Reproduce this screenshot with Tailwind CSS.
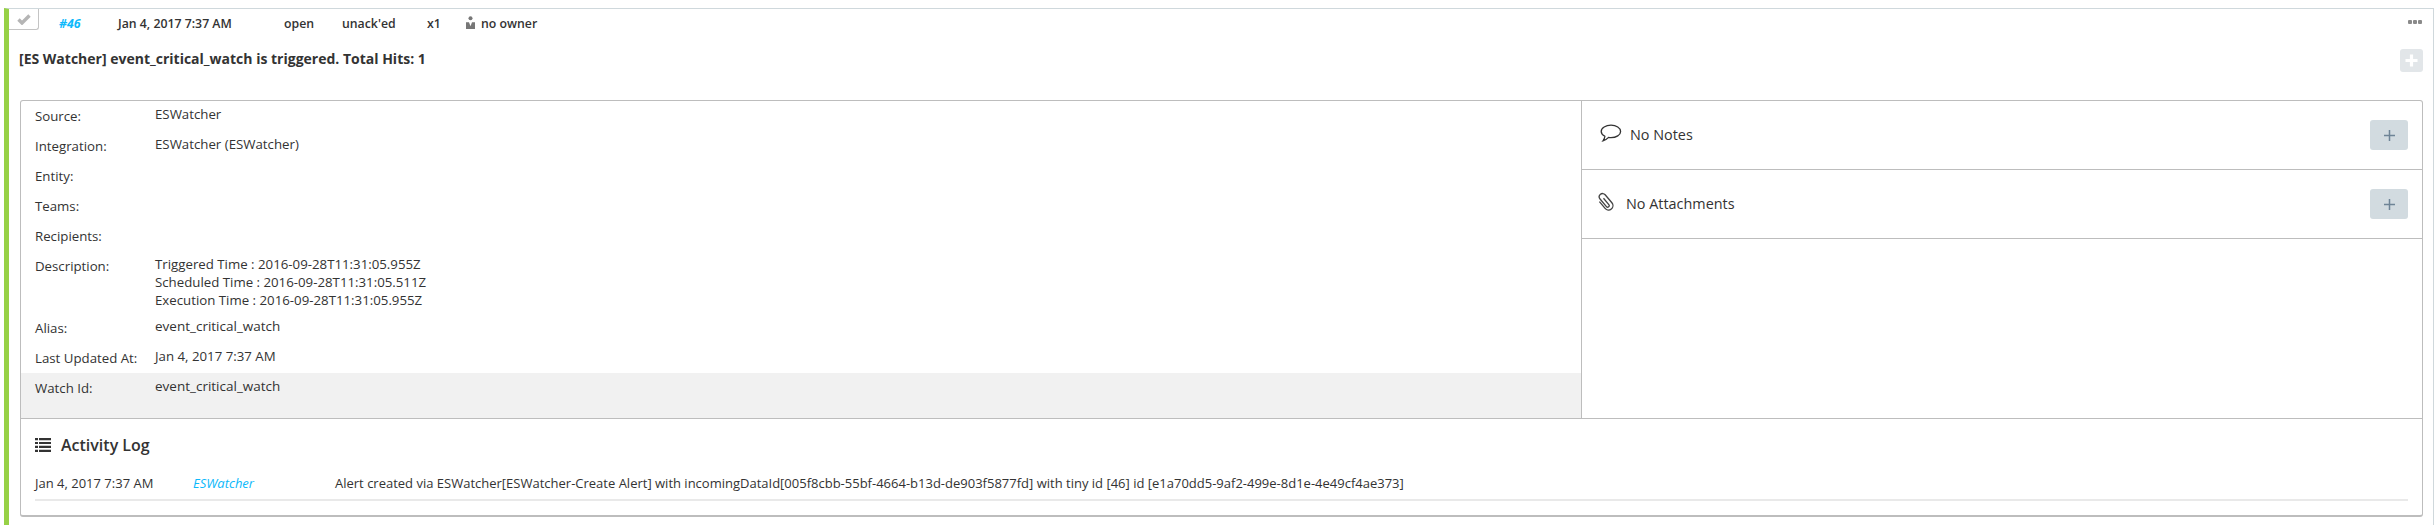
<!DOCTYPE html>
<html>
<head>
<meta charset="utf-8">
<script src="https://cdn.jsdelivr.net/npm/@tailwindcss/browser@4"></script>
</head>
<body class="bg-white font-['Open_Sans',sans-serif] text-[13.25px] text-[#333] h-[525px] overflow-hidden">
<div class="ml-1 mr-[1px] mt-2 h-[517px] border-l-[5px] border-l-[#97d146] border-t border-t-[#cfd8dc] border-r border-r-[#cfd8dc] flex flex-col">
  <div class="relative h-[30px] flex items-center font-semibold text-[12.3px] leading-none">
    <div class="w-[30px] h-[21px] self-start border-r border-b border-[#c4c4c4] rounded-br-[3px] flex items-center justify-center">
      <svg width="14" height="11" viewBox="0 0 14 11"><path d="M1.5 5.5 5 9l7.5-7.5" fill="none" stroke="#b5b5b5" stroke-width="3.4"/></svg>
    </div>
    <span class="ml-[20px] w-[59px] italic font-bold text-[#0db9fb]">#46</span>
    <span class="w-[166px]">Jan 4, 2017 7:37 AM</span>
    <span class="w-[58px]">open</span>
    <span class="w-[85px]">unack'ed</span>
    <span class="w-[39px]">x1</span>
    <svg class="mr-[6px] -mt-1" width="9" height="13" viewBox="0 0 9 13" fill="#777"><circle cx="4.5" cy="2.3" r="2"/><path d="M0 13V6.2h3l1.5 4 1.5-4h3V13z"/></svg>
    <span>no owner</span>
    <div class="absolute right-[11px] top-[11px] flex gap-[1px]">
      <i class="block w-[4px] h-[4px] rounded-[1px] bg-[#8a8a8a]"></i><i class="block w-[4px] h-[4px] rounded-[1px] bg-[#8a8a8a]"></i><i class="block w-[4px] h-[4px] rounded-[1px] bg-[#8a8a8a]"></i>
    </div>
  </div>
  <div class="relative h-[61px] pl-[10px] pt-[10px]">
    <h1 class="font-bold text-[14px] leading-[20px] text-[#333]">[ES Watcher] event_critical_watch is triggered. Total Hits: 1</h1>
    <div class="absolute right-[10px] top-[10px] w-[23px] h-[23px] rounded-[3px] bg-[#e2e6e9] flex items-center justify-center">
      <svg width="13" height="13" viewBox="0 0 13 13"><path d="M6.5 0.5v12M0.5 6.5h12" stroke="#fff" stroke-width="3.2"/></svg>
    </div>
  </div>
  <div class="ml-[11px] mr-[10px] h-[417px] border border-[#bdbdbd] border-b-2 rounded-[3px] flex flex-col">
    <div class="h-[318px] flex border-b border-[#bdbdbd]">
      <div class="w-[1561px] border-r border-[#bdbdbd] flex flex-col">
        <div class="flex h-[30px] pt-[6px] pl-[14px] items-start"><span class="w-[120px] leading-[18px]">Source:</span><span class="-mt-[2px] leading-[18px]">ESWatcher</span></div>
        <div class="flex h-[30px] pt-[6px] pl-[14px] items-start"><span class="w-[120px] leading-[18px]">Integration:</span><span class="-mt-[2px] leading-[18px]">ESWatcher (ESWatcher)</span></div>
        <div class="flex h-[30px] pt-[6px] pl-[14px] items-start"><span class="w-[120px] leading-[18px]">Entity:</span></div>
        <div class="flex h-[30px] pt-[6px] pl-[14px] items-start"><span class="w-[120px] leading-[18px]">Teams:</span></div>
        <div class="flex h-[30px] pt-[6px] pl-[14px] items-start"><span class="w-[120px] leading-[18px]">Recipients:</span></div>
        <div class="flex h-[62px] pt-[6px] pl-[14px] items-start"><span class="w-[120px] leading-[18px]">Description:</span><span class="-mt-[2px] leading-[18px]">Triggered Time : 2016-09-28T11:31:05.955Z<br>Scheduled Time : 2016-09-28T11:31:05.511Z<br>Execution Time : 2016-09-28T11:31:05.955Z</span></div>
        <div class="flex h-[30px] pt-[6px] pl-[14px] items-start"><span class="w-[120px] leading-[18px]">Alias:</span><span class="-mt-[2px] leading-[18px] text-[13.5px]">event_critical_watch</span></div>
        <div class="flex h-[30px] pt-[6px] pl-[14px] items-start"><span class="w-[120px] leading-[18px]">Last Updated At:</span><span class="-mt-[2px] leading-[18px]">Jan 4, 2017 7:37 AM</span></div>
        <div class="flex flex-1 pt-[6px] pl-[14px] items-start bg-[#f1f1f1]"><span class="w-[120px] leading-[18px]">Watch Id:</span><span class="-mt-[2px] leading-[18px] text-[13.5px]">event_critical_watch</span></div>
      </div>
      <div class="flex-1 flex flex-col">
        <div class="h-[69px] border-b border-[#bdbdbd] flex items-center pl-[18px] pr-[14px] text-[14.4px]">
          <svg class="-mt-[3px] mr-[8px]" width="22" height="19" viewBox="0 0 22 19"><path d="M11 1.2c5.2 0 9.6 2.6 9.6 6.2s-4.4 6.2-9.6 6.2c-1 0-1.6 0-2.4-.2-1.5 1.5-3.5 3-5.6 3.4 1-1.2 1.7-2.6 1.9-4.5C2.6 11 1.2 9.3 1.2 7.4 1.2 3.8 5.8 1.2 11 1.2z" fill="none" stroke="#333" stroke-width="1.3"/></svg>
          <span class="flex-1">No Notes</span>
          <div class="w-[38px] h-[30px] rounded-[3px] bg-[#d2dbe0] flex items-center justify-center"><svg width="11" height="11" viewBox="0 0 11 11"><path d="M5.5 0v11M0 5.5h11" stroke="#6e8496" stroke-width="1.5"/></svg></div>
        </div>
        <div class="h-[69px] border-b border-[#bdbdbd] flex items-center pl-[15px] pr-[14px] text-[14.4px]">
          <svg class="-mt-[5px] mr-[10px]" width="19" height="21" viewBox="0 0 17 19"><path d="M3.5 5.5v8a4 4 0 0 0 8 0V4a3 3 0 0 0-6 0v9a1.4 1.4 0 0 0 2.8 0V5.5" fill="none" stroke="#444" stroke-width="1.2" transform="rotate(-40 8.5 9.5)"/></svg>
          <span class="flex-1">No Attachments</span>
          <div class="w-[38px] h-[30px] rounded-[3px] bg-[#d2dbe0] flex items-center justify-center"><svg width="11" height="11" viewBox="0 0 11 11"><path d="M5.5 0v11M0 5.5h11" stroke="#6e8496" stroke-width="1.5"/></svg></div>
        </div>
      </div>
    </div>
    <div class="flex-1 pl-[14px] pr-[14px]">
      <div class="h-[52px] flex items-center font-semibold text-[16px]">
        <svg class="mr-[10px]" width="16" height="14" viewBox="0 0 16 14" fill="#333"><path d="M0 0h3v2.2H0zM4 0h12v2.2H4zM0 3.9h3v2.2H0zM4 3.9h12v2.2H4zM0 7.8h3V10H0zM4 7.8h12V10H4zM0 11.7h3v2.2H0zM4 11.7h12v2.2H4z"/></svg>
        <span>Activity Log</span>
      </div>
      <div class="h-[30px] pb-[4px] flex items-center border-b-2 border-[#e9e9e9] text-[13px] leading-none">
        <span class="w-[158px]">Jan 4, 2017 7:37 AM</span>
        <span class="w-[142px] italic font-medium text-[#0db9fb]">ESWatcher</span>
        <span>Alert created via ESWatcher[ESWatcher-Create Alert] with incomingDataId[005f8cbb-55bf-4664-b13d-de903f5877fd] with tiny id [46] id [e1a70dd5-9af2-499e-8d1e-4e49cf4ae373]</span>
      </div>
    </div>
  </div>
</div>
</body>
</html>
